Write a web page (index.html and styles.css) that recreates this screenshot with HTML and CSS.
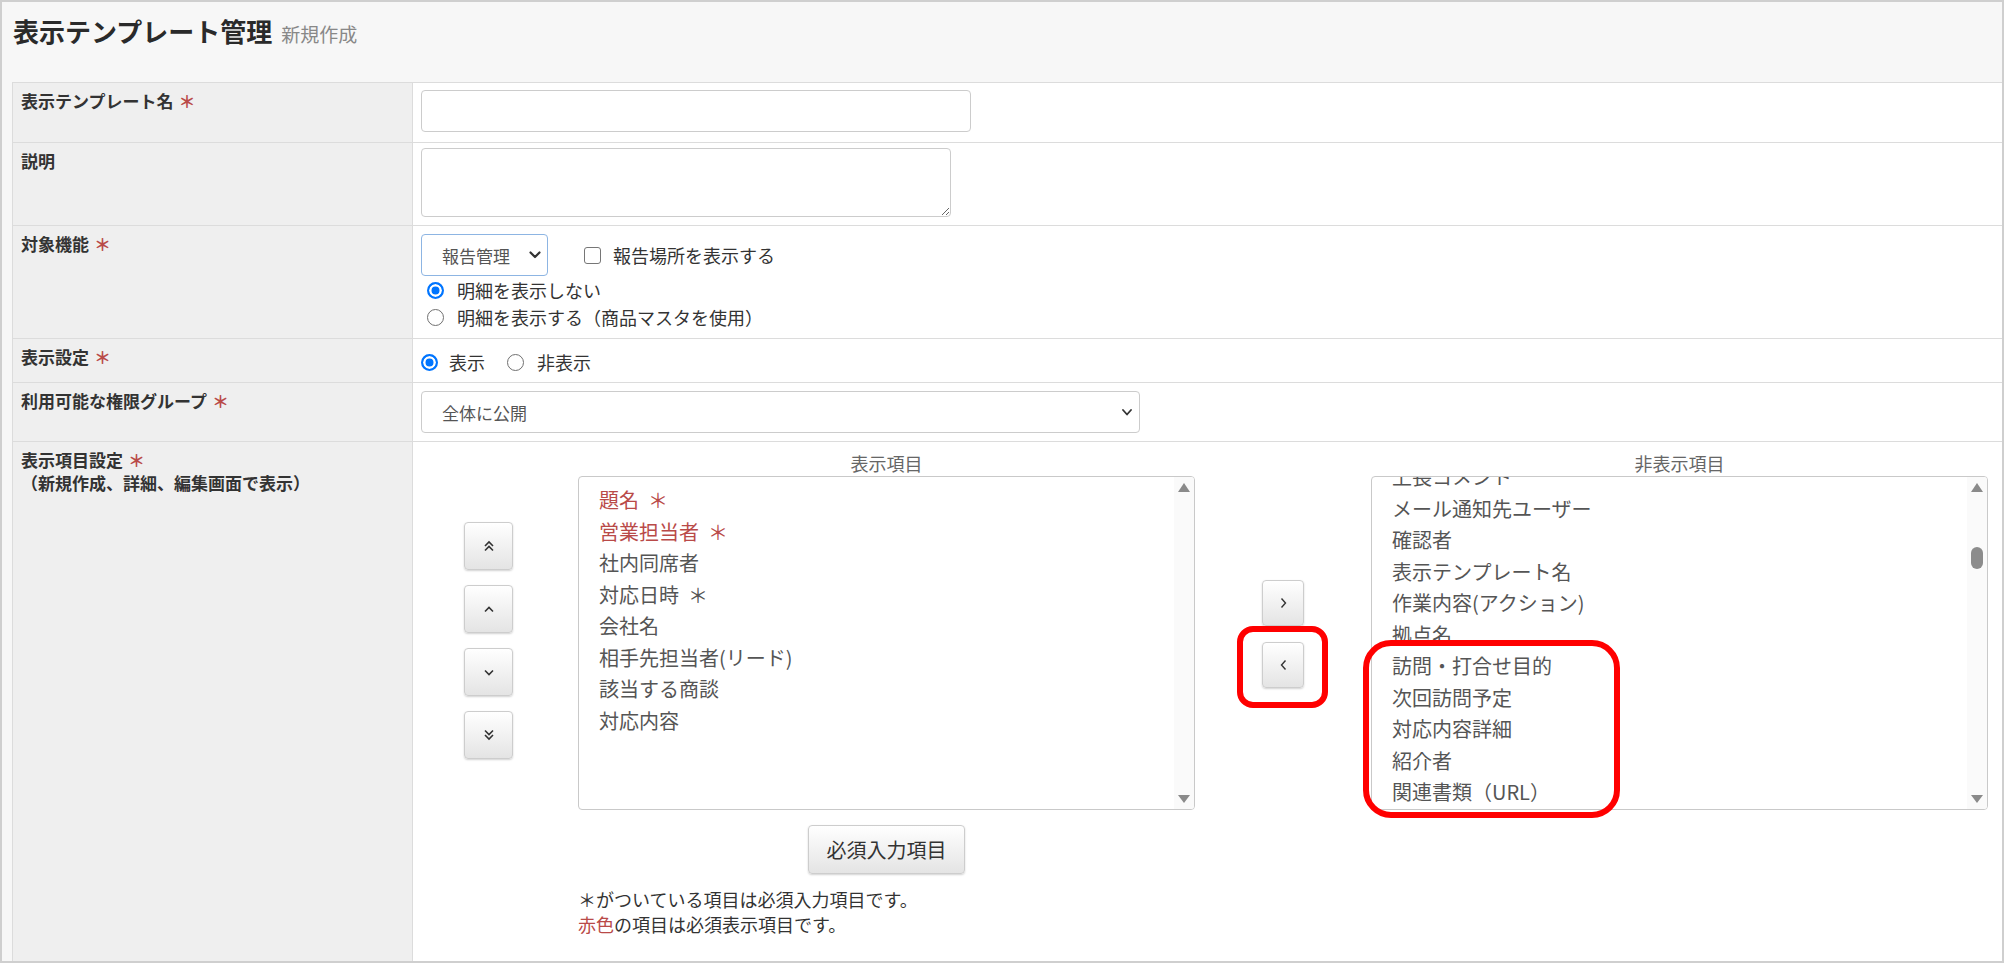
FILE: index.html
```html
<!DOCTYPE html>
<html lang="ja">
<head>
<meta charset="utf-8">
<title>表示テンプレート管理</title>
<link rel="stylesheet" href="styles.css">
</head>
<body>
<div class="page">
  <div class="header">
    <h1 class="title">表示テンプレート管理<small class="subtitle">新規作成</small></h1>
  </div>
  <div class="form">
    <div class="row">
      <div class="label">表示テンプレート名<span class="req">＊</span></div>
      <div class="value v1"><input class="text-input" type="text"></div>
    </div>
    <div class="row">
      <div class="label">説明</div>
      <div class="value v2"><textarea class="textarea"></textarea></div>
    </div>
    <div class="row">
      <div class="label">対象機能<span class="req">＊</span></div>
      <div class="value v3">
        <div class="line-select">
          <div class="select select-small select-focus">
            <span>報告管理</span>
            <svg class="chev-bold" width="12" height="8" viewBox="0 0 12 8"><polyline points="1.5,1.5 6,6 10.5,1.5" fill="none" stroke="#333" stroke-width="2.2" stroke-linecap="round" stroke-linejoin="round"/></svg>
          </div>
          <span class="checkbox"></span>
          <span class="check-text">報告場所を表示する</span>
        </div>
        <div class="radios">
          <div class="radio-line"><span class="radio checked"></span><span class="radio-text">明細を表示しない</span></div>
          <div class="radio-line"><span class="radio"></span><span class="radio-text">明細を表示する（商品マスタを使用）</span></div>
        </div>
      </div>
    </div>
    <div class="row">
      <div class="label">表示設定<span class="req">＊</span></div>
      <div class="value v4">
        <div class="radio-line">
          <span class="radio checked"></span><span class="radio-text tight">表示</span>
          <span class="radio second"></span><span class="radio-text">非表示</span>
        </div>
      </div>
    </div>
    <div class="row">
      <div class="label">利用可能な権限グループ<span class="req">＊</span></div>
      <div class="value v5">
        <div class="select select-wide">
          <span>全体に公開</span>
          <svg width="10" height="7" viewBox="0 0 10 7"><polyline points="1,1 5,5.5 9,1" fill="none" stroke="#333" stroke-width="1.8" stroke-linecap="round" stroke-linejoin="round"/></svg>
        </div>
      </div>
    </div>
    <div class="row row-last">
      <div class="label">表示項目設定<span class="req">＊</span><br>（新規作成、詳細、編集画面で表示）</div>
      <div class="value v6">
        <div class="col-btns-left">
          <button class="btn btn-sort" type="button"><svg width="12" height="12" viewBox="0 0 12 12"><polyline points="2,6 6,2 10,6" fill="none" stroke="#333" stroke-width="1.6"/><polyline points="2,10.5 6,6.5 10,10.5" fill="none" stroke="#333" stroke-width="1.6"/></svg></button>
          <button class="btn btn-sort" type="button"><svg width="10" height="7" viewBox="0 0 10 7"><polyline points="1,5.5 5,1.5 9,5.5" fill="none" stroke="#333" stroke-width="1.6"/></svg></button>
          <button class="btn btn-sort" type="button"><svg width="10" height="7" viewBox="0 0 10 7"><polyline points="1,1.5 5,5.5 9,1.5" fill="none" stroke="#333" stroke-width="1.6"/></svg></button>
          <button class="btn btn-sort" type="button"><svg width="12" height="12" viewBox="0 0 12 12"><polyline points="2,1.5 6,5.5 10,1.5" fill="none" stroke="#333" stroke-width="1.6"/><polyline points="2,6 6,10 10,6" fill="none" stroke="#333" stroke-width="1.6"/></svg></button>
        </div>
        <div class="col-list">
          <div class="list-head">表示項目</div>
          <div class="listbox">
            <div class="items">
              <div class="item red">題名<span class="ast">＊</span></div>
              <div class="item red">営業担当者<span class="ast">＊</span></div>
              <div class="item">社内同席者</div>
              <div class="item">対応日時<span class="ast">＊</span></div>
              <div class="item">会社名</div>
              <div class="item">相手先担当者(リード)</div>
              <div class="item">該当する商談</div>
              <div class="item">対応内容</div>
            </div>
            <div class="sbar"><span class="arr-up"></span><span class="arr-down"></span></div>
          </div>
          <button class="btn btn-req" type="button">必須入力項目</button>
          <div class="notes">
            <div>＊がついている項目は必須入力項目です。</div>
            <div><span class="red-text">赤色</span>の項目は必須表示項目です。</div>
          </div>
        </div>
        <div class="col-btns-mid">
          <button class="btn btn-move" type="button"><svg width="7" height="12" viewBox="0 0 7 12"><polyline points="1.5,1.5 5.5,6 1.5,10.5" fill="none" stroke="#333" stroke-width="1.4"/></svg></button>
          <button class="btn btn-move" type="button"><svg width="7" height="12" viewBox="0 0 7 12"><polyline points="5.5,1.5 1.5,6 5.5,10.5" fill="none" stroke="#333" stroke-width="1.4"/></svg></button>
        </div>
        <div class="col-list">
          <div class="list-head">非表示項目</div>
          <div class="listbox">
            <div class="items">
              <div class="scrolled">
                <div class="item">上長コメント</div>
                <div class="item">メール通知先ユーザー</div>
                <div class="item">確認者</div>
                <div class="item">表示テンプレート名</div>
                <div class="item">作業内容(アクション)</div>
                <div class="item">拠点名</div>
                <div class="item">訪問・打合せ目的</div>
                <div class="item">次回訪問予定</div>
                <div class="item">対応内容詳細</div>
                <div class="item">紹介者</div>
                <div class="item">関連書類（URL）</div>
              </div>
            </div>
            <div class="sbar"><span class="arr-up"></span><span class="thumb"></span><span class="arr-down"></span></div>
          </div>
        </div>
      </div>
    </div>
  </div>
  <div class="annot annot-btn"></div>
  <div class="annot annot-items"></div>
</div>
</body>
</html>
```
FILE: styles.css
```css
* { box-sizing: border-box; }
html, body { margin: 0; padding: 0; }
body {
  font-family: "Noto Sans CJK JP", "Noto Sans", sans-serif;
  color: #333;
  background: #fff;
}
.page {
  position: relative;
  width: 2004px;
  height: 963px;
  border: 2px solid #cfcfcf;
  background: #f7f7f7;
  display: flex;
  flex-direction: column;
  overflow: hidden;
}
.header {
  flex: none;
  height: 80px;
  padding: 10px 0 0 11px;
}
.title {
  margin: 0;
  font-size: 26px;
  line-height: 38px;
  font-weight: 700;
  color: #2a2a2a;
}
.subtitle {
  font-size: 19px;
  font-weight: 400;
  color: #888;
  margin-left: 9px;
}
.form {
  flex: 1;
  margin-left: 10px;
  border-left: 1px solid #dcdcdc;
  display: flex;
  flex-direction: column;
  background: #fff;
}
.row {
  display: grid;
  grid-template-columns: 400px 1fr;
  border-top: 1px solid #dcdcdc;
}
.row-last { flex: 1; }
.label {
  background: #efefef;
  border-right: 1px solid #dcdcdc;
  padding: 6px 8px;
  font-size: 17px;
  font-weight: 700;
  line-height: 23px;
  color: #333;
}
.req {
  color: #b94a48;
  margin-left: 5px;
}
.value { font-size: 18px; color: #333; }
.v1 { padding: 7px 8px 10px; }
.v2 { padding: 5px 8px 8px; }
.v3 { padding: 8px 8px 7px; }
.v4 { padding: 10px 8px 6px; }
.v5 { padding: 8px 8px 8px; }

.text-input {
  display: block;
  width: 550px;
  height: 42px;
  border: 1px solid #cccccc;
  border-radius: 4px;
  background: #fff;
  font-family: inherit;
  font-size: 17px;
  outline: none;
}
.textarea {
  display: block;
  width: 530px;
  height: 69px;
  border: 1px solid #cccccc;
  border-radius: 4px;
  background: #fff;
  font-family: inherit;
  font-size: 17px;
  margin: 0;
  outline: none;
}
.select {
  display: flex;
  align-items: center;
  justify-content: space-between;
  height: 42px;
  border: 1px solid #cccccc;
  border-radius: 4px;
  background: #fff;
  font-size: 17px;
  color: #555;
  padding: 0 7px 0 20px;
}
.select-small { width: 127px; padding-right: 6px; }
.select-focus { border-color: #8db5e3; }
.select-wide { width: 719px; }

.line-select {
  display: flex;
  align-items: center;
}
.checkbox {
  width: 17px;
  height: 17px;
  border: 1px solid #767676;
  border-radius: 3px;
  background: #fff;
  margin-left: 36px;
  flex: none;
}
.check-text { margin-left: 12px; line-height: 27px; }
.radios { margin-top: 1px; padding-left: 6px; }
.radio-line {
  display: flex;
  align-items: center;
  height: 27px;
  line-height: 27px;
}
.radio {
  flex: none;
  width: 17px;
  height: 17px;
  border-radius: 50%;
  border: 1px solid #707070;
  background: #fff;
}
.radio.checked {
  border: 2px solid #0075ff;
  background: #0075ff;
  box-shadow: inset 0 0 0 2.5px #fff;
}
.radio-text { margin-left: 13px; }
.radio-text.tight { margin-left: 11px; }
.radio.second { margin-left: 22px; }

.v6 {
  display: grid;
  grid-template-columns: 165px 617px 176px 617px;
  align-items: start;
}
.col-btns-left {
  display: flex;
  flex-direction: column;
  gap: 15px;
  padding: 80px 0 0 51px;
}
.col-btns-mid {
  display: flex;
  flex-direction: column;
  gap: 16px;
  padding: 138px 0 0 67px;
}
.btn {
  display: flex;
  align-items: center;
  justify-content: center;
  padding: 0;
  margin: 0;
  border: 1px solid #cdcdcd;
  border-radius: 4px;
  background: linear-gradient(#ffffff, #e4e4e4);
  box-shadow: 0 1px 2px rgba(0, 0, 0, 0.18);
  font-family: inherit;
  color: #333;
  cursor: pointer;
}
.btn-sort { width: 49px; height: 48px; }
.btn-move { width: 42px; height: 46px; }
.btn-req {
  width: 157px;
  height: 49px;
  margin: 15px auto 0;
  font-size: 20px;
}
.list-head {
  height: 34px;
  padding-top: 8px;
  line-height: 26px;
  text-align: center;
  font-size: 18px;
  color: #666;
}
.listbox {
  display: flex;
  height: 334px;
  border: 1px solid #c9c9c9;
  border-radius: 4px;
  background: #fff;
  overflow: hidden;
}
.items {
  flex: 1;
  overflow: hidden;
  padding: 7px 0 0 20px;
  font-size: 20px;
  line-height: 31.5px;
  color: #555;
}
.ast { margin-left: 9px; }
.scrolled { margin-top: -23px; }
.item.red { color: #b94a48; }
.sbar {
  flex: none;
  width: 20px;
  background: #fafafa;
  display: flex;
  flex-direction: column;
  align-items: center;
  padding: 6px 0 6px;
}
.arr-up {
  width: 0;
  height: 0;
  border-left: 6px solid transparent;
  border-right: 6px solid transparent;
  border-bottom: 9px solid #8a8a8a;
}
.arr-down {
  margin-top: auto;
  width: 0;
  height: 0;
  border-left: 6px solid transparent;
  border-right: 6px solid transparent;
  border-top: 8px solid #8a8a8a;
}
.thumb {
  margin-top: 55px;
  width: 12px;
  height: 22px;
  border-radius: 6px;
  background: #8c8c8c;
}
.notes {
  margin-top: 13px;
  font-size: 18px;
  line-height: 25px;
  color: #333;
}
.red-text { color: #b94a48; }

.annot {
  position: absolute;
  border: 6px solid #ff0000;
  pointer-events: none;
}
.annot-btn {
  left: 1235px;
  top: 624px;
  width: 91px;
  height: 82px;
  border-radius: 16px;
}
.annot-items {
  left: 1361px;
  top: 638px;
  width: 257px;
  height: 178px;
  border-radius: 28px;
}
```
